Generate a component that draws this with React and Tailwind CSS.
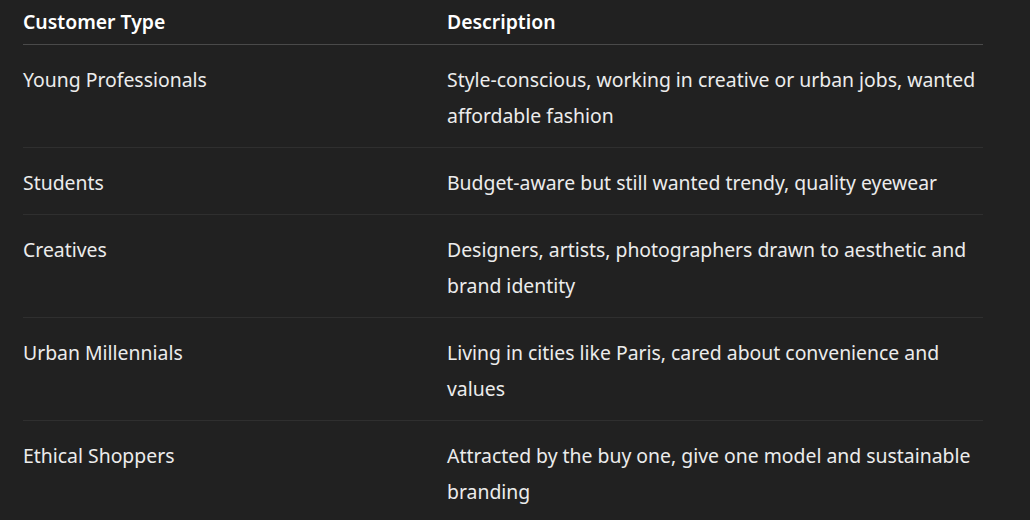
const rows = [
  ["Young Professionals", "Style-conscious, working in creative or urban jobs, wanted affordable fashion"],
  ["Students", "Budget-aware but still wanted trendy, quality eyewear"],
  ["Creatives", "Designers, artists, photographers drawn to aesthetic and brand identity"],
  ["Urban Millennials", "Living in cities like Paris, cared about convenience and values"],
  ["Ethical Shoppers", "Attracted by the buy one, give one model and sustainable branding"],
];

export default function App() {
  return (
    <div className="h-[520px] overflow-hidden bg-[#212121] text-[#ececec] font-['Noto_Sans',sans-serif] text-[19.4px] leading-[36px]">
      <table className="ml-[23px] w-[960px] table-fixed border-collapse">
        <thead>
          <tr className="border-b border-[#4a4a4a]">
            <th className="w-[424px] pt-[4px] pb-[4px] text-left font-semibold text-white">Customer Type</th>
            <th className="pt-[4px] pb-[4px] text-left font-semibold text-white">Description</th>
          </tr>
        </thead>
        <tbody>
          {rows.map(([a, b], i) => (
            <tr key={a} className={i < rows.length - 1 ? "border-b border-[#2f2f2f]" : ""}>
              <td className="pt-[17px] pb-[13px] pr-4 align-top">{a}</td>
              <td className="pt-[17px] pb-[13px] align-top">{b}</td>
            </tr>
          ))}
        </tbody>
      </table>
    </div>
  );
}
